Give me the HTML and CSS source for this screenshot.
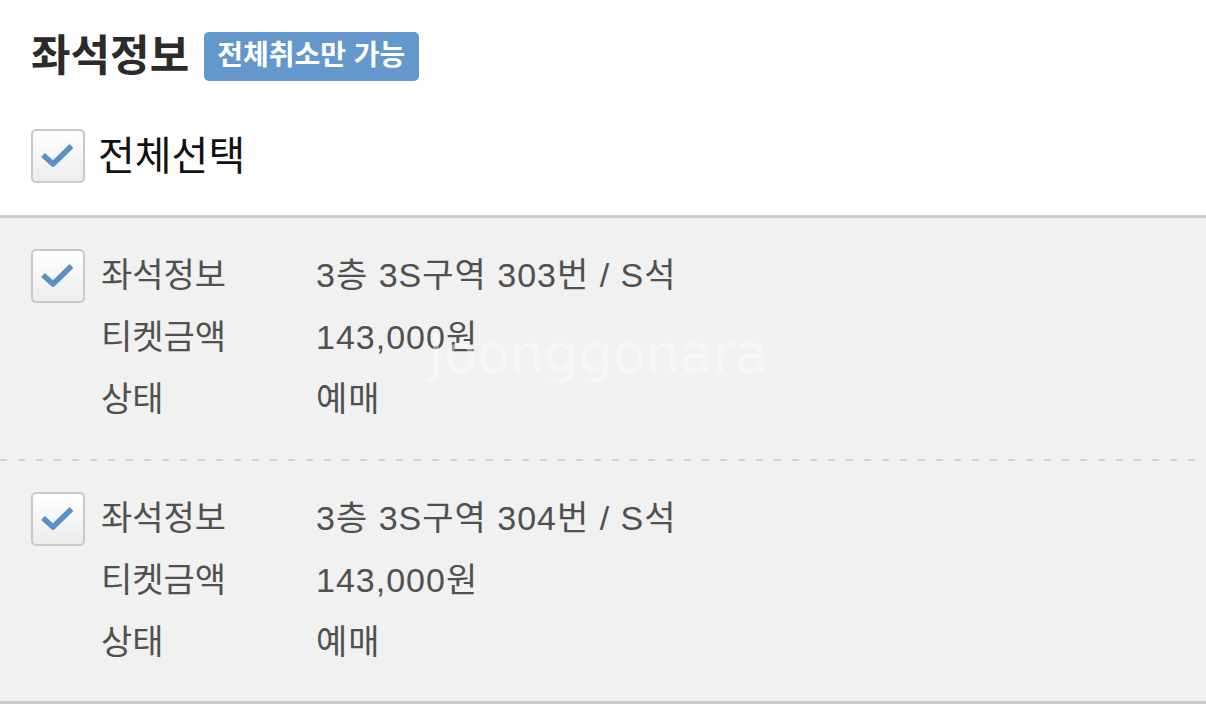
FILE: index.html
```html
<!DOCTYPE html>
<html lang="ko">
<head>
    <meta charset="UTF-8">
    <title>좌석정보</title>
    <link rel="stylesheet" href="styles.css">
</head>
<body>
    <div class="wrap">
        <div class="head">
            <h2 class="title">좌석정보</h2>
            <span class="badge">전체취소만 가능</span>
        </div>
        <div class="all">
            <span class="check"><svg width="50" height="50" viewBox="0 0 50 50"><path d="M10 24 L20 33 L38.5 15" fill="none" stroke="#5b8fc7" stroke-width="5.5" stroke-linejoin="round"/></svg></span>
            <span class="all-text">전체선택</span>
        </div>
        <div class="list">
            <div class="item">
                <span class="check"><svg width="50" height="50" viewBox="0 0 50 50"><path d="M10 24 L20 33 L38.5 15" fill="none" stroke="#5b8fc7" stroke-width="5.5" stroke-linejoin="round"/></svg></span>
                <dl class="info">
                    <dt>좌석정보</dt><dd>3층 3S구역 303번 / S석</dd>
                    <dt>티켓금액</dt><dd>143,000원</dd>
                    <dt>상태</dt><dd>예매</dd>
                </dl>
            </div>
            <div class="item">
                <span class="check"><svg width="50" height="50" viewBox="0 0 50 50"><path d="M10 24 L20 33 L38.5 15" fill="none" stroke="#5b8fc7" stroke-width="5.5" stroke-linejoin="round"/></svg></span>
                <dl class="info">
                    <dt>좌석정보</dt><dd>3층 3S구역 304번 / S석</dd>
                    <dt>티켓금액</dt><dd>143,000원</dd>
                    <dt>상태</dt><dd>예매</dd>
                </dl>
            </div>
            <div class="mark">Joonggonara</div>
        </div>
    </div>
</body>
</html>
```

FILE: styles.css
```css
body{
    margin: 0;
    background: #fff;
    font-family: "Liberation Sans", "Noto Sans CJK KR", sans-serif;
}
.wrap{
    width: 1206px;
}
.wrap .head{
    display: flex;
    align-items: center;
    gap: 15px;
    height: 49px;
    padding: 32px 0 0 31px;
}
.wrap .title{
    margin: 0;
    font-size: 43px;
    line-height: 1;
    font-weight: bold;
    color: #2b2b2b;
}
.wrap .badge{
    display: inline-block;
    height: 49px;
    line-height: 48px;
    padding: 0 14px 0 13px;
    border-radius: 5px;
    background: #6497cb;
    color: #fff;
    font-size: 28px;
    font-weight: bold;
}
.wrap .all{
    display: flex;
    align-items: center;
    gap: 13px;
    height: 54px;
    padding: 48px 0 32px 31px;
}
.wrap .all-text{
    font-size: 40px;
    line-height: 1;
    color: #111;
}
.wrap .check{
    display: block;
    flex: none;
    width: 50px;
    height: 50px;
    border: 2px solid #c9c9c9;
    border-radius: 5px;
    background: linear-gradient(#fff, #ececec);
}
.wrap .check svg{
    display: block;
}
.wrap .list{
    position: relative;
    border-top: 3px solid #cdcdcd;
    border-bottom: 3px solid #cdcdcd;
    background: #f1f1f1;
}
.wrap .item{
    display: flex;
    gap: 16px;
    padding: 26px 0 29px 31px;
}
.wrap .item + .item{
    padding-bottom: 28px;
    background: repeating-linear-gradient(90deg, #d3d3d3 0 7px, transparent 7px 18px) top left / 100% 2px no-repeat;
    padding-top: 28px;
}
.wrap .item .check{
    margin-top: 5px;
}
.wrap .info{
    display: grid;
    grid-template-columns: 215px auto;
    margin: 0;
    font-size: 34px;
    line-height: 62px;
    color: #505050;
}
.wrap .info dd{
    margin: 0;
    letter-spacing: 1px;
}
.wrap .mark{
    position: absolute;
    top: 104px;
    left: 428px;
    font-family: "DejaVu Sans", sans-serif;
    font-size: 54px;
    color: rgba(255, 255, 255, 0.4);
}
```
